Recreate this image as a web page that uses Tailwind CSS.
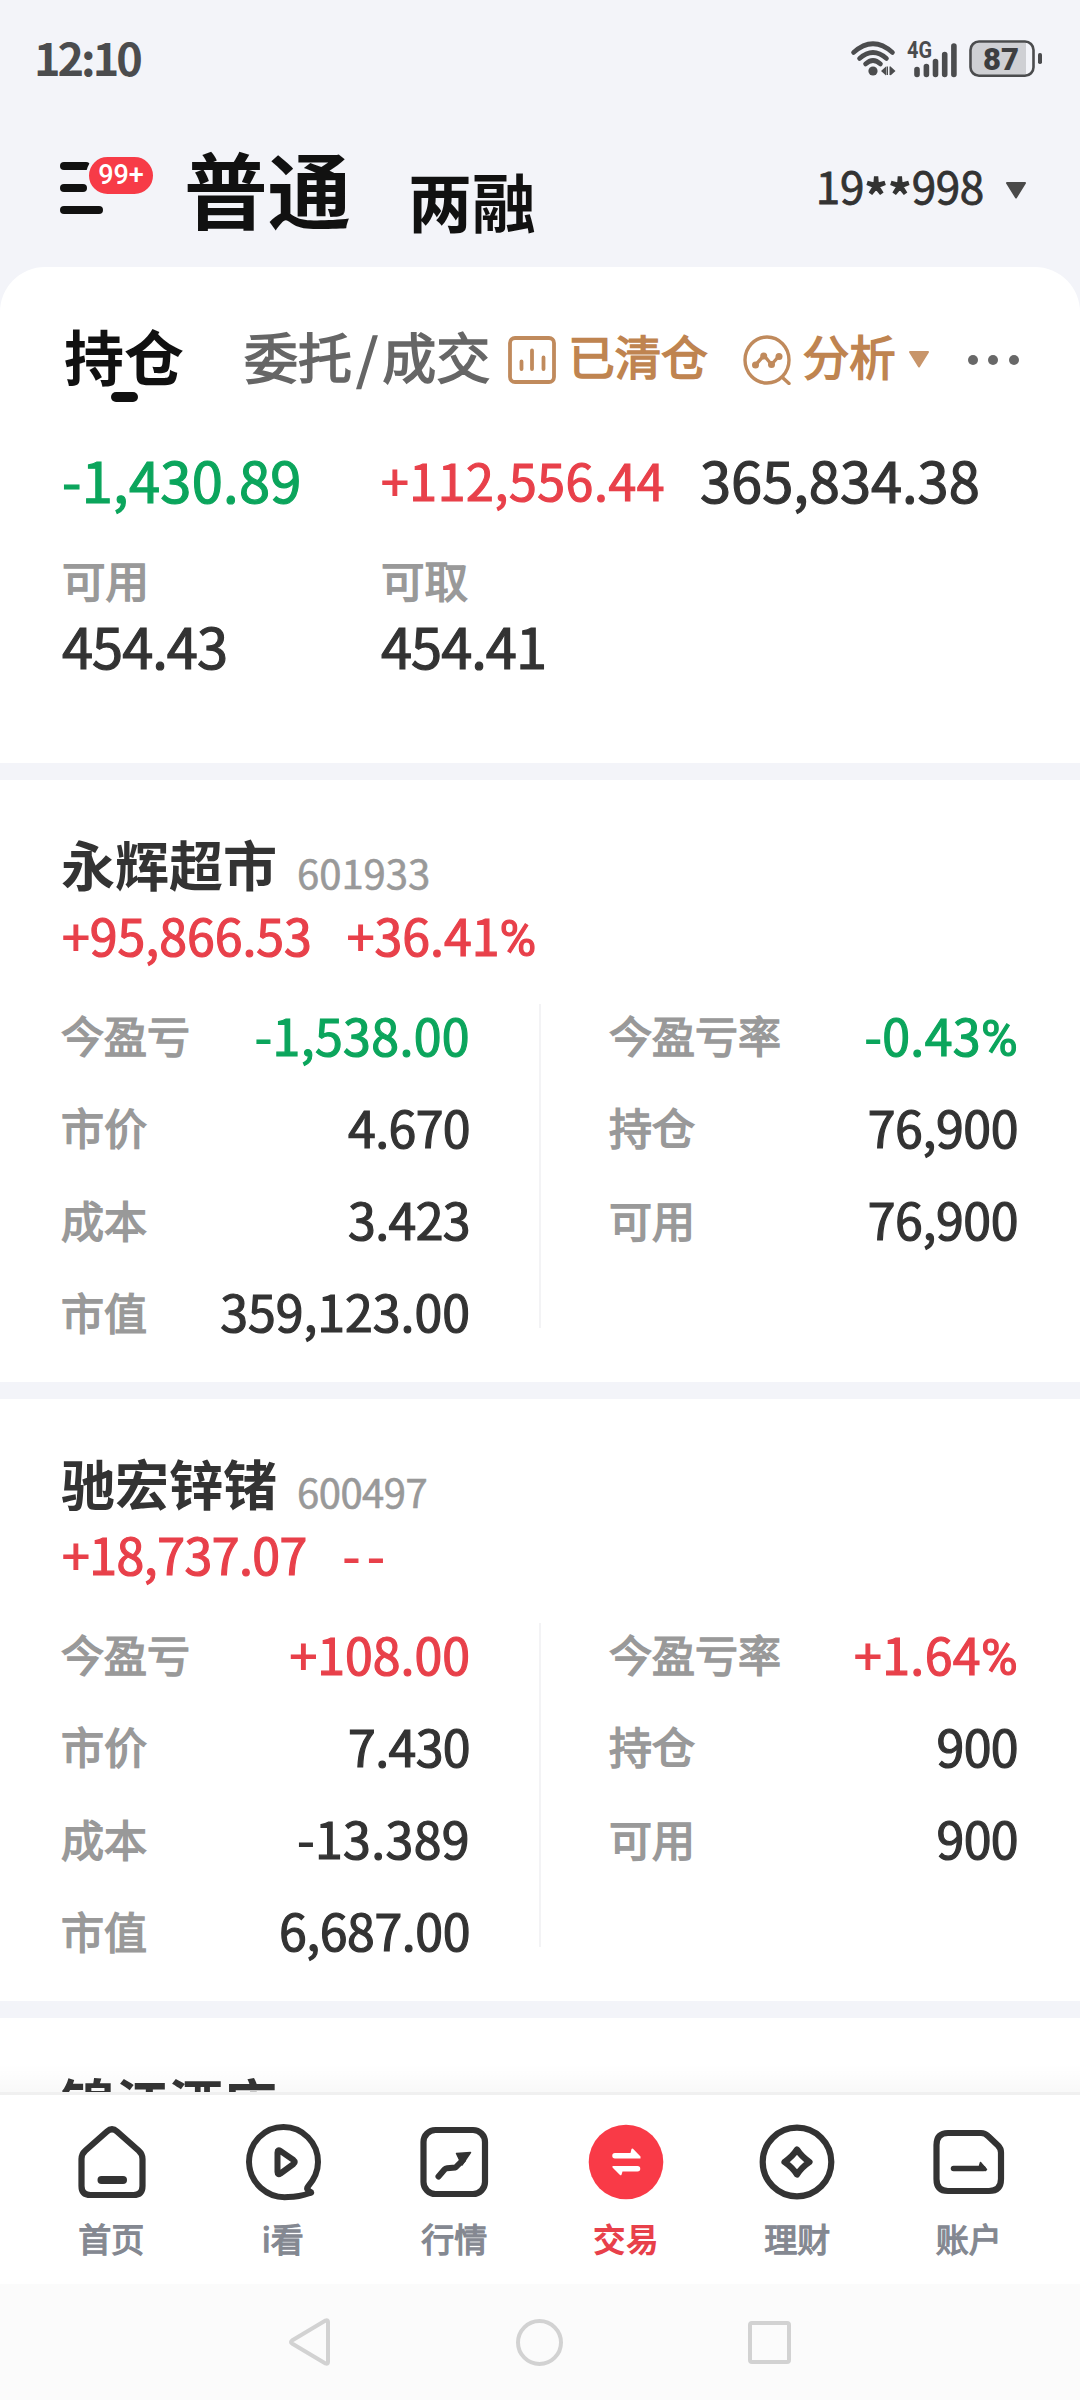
<!DOCTYPE html>
<html lang="zh-CN">
<head>
<meta charset="utf-8">
<meta name="viewport" content="width=1080">
<title>交易 - 持仓</title>
<script src="https://cdn.jsdelivr.net/npm/@tailwindcss/browser@4"></script>
</head>
<body class="bg-[#f3f4f9] font-['Noto_Sans_CJK_SC',sans-serif] text-[#333333]">
<div class="flex h-[2400px] w-[1080px] flex-col overflow-hidden whitespace-nowrap">

  <!-- Status bar -->
  <div class="flex h-[119px] shrink-0 items-center justify-between pr-[37px] pl-[34px]">
    <div class="pb-[6px] text-[45px] leading-none font-bold tracking-[-3px] text-[#4b4c4e]">12:10</div>
    <svg class="h-[60px] w-[194px]" viewBox="849 29 194 60" fill="none">
      <g stroke="#4b4c4e" stroke-width="4.6" stroke-linecap="round">
        <path d="M853.5 51.5Q873 34 892.5 51.5"/>
        <path d="M859.5 57.5Q873 45.500 886.500 57.500"/>
        <path d="M865.500 63Q873 56 880.500 63"/>
      </g>
      <circle cx="873" cy="70" r="4.600" fill="#4b4c4e"/>
      <path d="M881 70l5-4.500v9zM886.500 65.500h1.500v8.500h-1.500zM889.500 65.500h1.500v8.500h-1.500zM890.500 65.500l5 4.500-5 4.500z" fill="#4b4c4e"/>
      <text x="907" y="57.300" font-family="Roboto, sans-serif" font-weight="700" font-size="23" textLength="25" lengthAdjust="spacingAndGlyphs" fill="#4b4c4e">4G</text>
      <g stroke="#4b4c4e" stroke-width="5.600" stroke-linecap="round">
        <path d="M917 68.500V73.500M926.400 65.500V73.500M935.500 60.500V73.500M944.700 53.500V73.500M953.900 45V73.500"/>
      </g>
      <path d="M978 41.500H1026V74H978a6.500 6.500 0 0 1-6.500-6.500V48a6.500 6.500 0 0 1 6.500-6.500z" fill="#cfd0d4"/>
      <rect x="970.500" y="40.500" width="63" height="34.200" rx="8.500" stroke="#4b4c4e" stroke-width="2.600"/>
      <rect x="1038" y="52" width="4" height="11" rx="1.800" fill="#4b4c4e"/>
      <text x="983" y="69" font-family="Roboto, sans-serif" font-weight="900" font-size="32" textLength="36" lengthAdjust="spacingAndGlyphs" fill="#3d3e40">87</text>
    </svg>
  </div>

  <!-- Account header -->
  <div class="flex h-[148px] shrink-0 items-start pl-[60px]">
    <div class="relative mt-[43px] h-[52px] w-[124px]">
      <div class="flex flex-col gap-[14.500px]">
        <div class="h-[7.500px] w-[30px] rounded-full bg-[#111111]"></div>
        <div class="h-[7.500px] w-[27px] rounded-full bg-[#111111]"></div>
        <div class="h-[7.500px] w-[43px] rounded-full bg-[#111111]"></div>
      </div>
      <div class="absolute -top-[8px] left-[26px] flex h-[43px] w-[70px] items-center justify-center rounded-full border-[3px] border-[#f3f4f9] bg-[#f73b47] font-['Roboto',sans-serif] text-[27px] leading-none font-medium text-white">99+</div>
    </div>
    <h1 class="mt-[28px] text-[83.500px] leading-[80px] font-bold text-[#111111]">普通</h1>
    <div class="mt-[50px] ml-[57px] text-[64px] leading-[60px] font-bold text-[#111111]">两融</div>
    <div class="mt-[41px] ml-auto flex items-center pr-[53px]">
      <div class="flex text-[44px] leading-[50px] tracking-[-0.300px] [-webkit-text-stroke:0.8px_currentColor]">19<span class="mt-[11px] -mb-[11px] text-[52px] tracking-[-0.500px] [-webkit-text-stroke:1.6px_currentColor]">**</span>998</div>
      <svg class="mt-[10px] ml-[21px] h-[17px] w-[22px]" viewBox="0 0 22 17"><path d="M2 1H20L11 15.500z" fill="#4a4a4a" stroke="#4a4a4a" stroke-width="2" stroke-linejoin="round"/></svg>
    </div>
  </div>

  <!-- Scrolling content -->
  <main class="relative h-[1825px] shrink-0 overflow-hidden">
    <section class="h-[496px] rounded-t-[45px] bg-white">
      <nav class="flex h-[176px] items-center pl-[64px]">
        <div class="relative text-[60px] leading-[70px] font-bold text-[#111111]">持仓
          <span class="absolute top-[72px] left-[47px] h-[10px] w-[27px] rounded-full bg-[#111111]"></span>
        </div>
        <div class="ml-[60px] pt-[1px] text-[54px] text-[#666666] [-webkit-text-stroke:1.6px_currentColor]">委托<span class="mx-[4.500px]">/</span>成交</div>
        <svg class="mt-[9px] ml-[18px] h-[48px] w-[48px] shrink-0" viewBox="0 0 48 48" fill="none" stroke="#c08a5c" stroke-width="3.800" stroke-linecap="round">
          <rect x="2" y="2" width="44" height="44" rx="5"/>
          <path d="M13.500 25.500V33M24 14.500V33M35.500 21.500V33"/>
        </svg>
        <div class="ml-[12px] text-[46.500px] text-[#bf8450] [-webkit-text-stroke:1.6px_currentColor]">已清仓</div>
        <svg class="mt-[9px] ml-[35px] h-[50px] w-[48px] shrink-0" viewBox="0 0 48 50" fill="none" stroke="#c08a5c" stroke-width="3.400" stroke-linecap="round" stroke-linejoin="round">
          <ellipse cx="24" cy="25" rx="22" ry="23"/>
          <path d="M40 43l6 5.500M12.500 30l8.500-9.500 7.500 9 7.500-8.500"/>
          <g fill="#c08a5c" stroke="none"><circle cx="12.500" cy="30" r="3.500"/><circle cx="20.700" cy="21" r="3.500"/><circle cx="28.500" cy="29.500" r="3.500"/><circle cx="36" cy="21.500" r="3.500"/></g>
        </svg>
        <div class="ml-[12px] text-[46.500px] text-[#bf8450] [-webkit-text-stroke:1.6px_currentColor]">分析</div>
        <svg class="mt-[8px] ml-[12px] h-[17px] w-[22px] shrink-0" viewBox="0 0 22 17"><path d="M2 1H20L11 15.500z" fill="#c8956a" stroke="#c8956a" stroke-width="2" stroke-linejoin="round"/></svg>
        <div class="mt-[10px] ml-[38px] flex shrink-0 gap-[10.500px]">
          <span class="h-[10px] w-[10px] rounded-full bg-[#686868]"></span>
          <span class="h-[10px] w-[10px] rounded-full bg-[#686868]"></span>
          <span class="h-[10px] w-[10px] rounded-full bg-[#686868]"></span>
        </div>
      </nav>
      <div class="grid h-[79px] grid-cols-[319px_319px_1fr] items-center pb-[8px] pl-[62px] [-webkit-text-stroke:1.2px_currentColor]">
        <div class="text-[56px] leading-none tracking-[0.300px] text-[#0ba55c]">-1,430.89</div>
        <div class="text-[50px] leading-none tracking-[0.600px] text-[#e8404a]">+112,556.44</div>
        <div class="text-[56px] leading-none">365,834.38</div>
      </div>
      <div class="mt-[30px] grid grid-cols-[319px_319px_1fr] pl-[62px]">
        <div>
          <div class="text-[43.500px] leading-[56px] text-[#999999] [-webkit-text-stroke:1.6px_currentColor]">可用</div>
          <div class="text-[56px] leading-[73px] tracking-[-1px] [-webkit-text-stroke:1.2px_currentColor]">454.43</div>
        </div>
        <div>
          <div class="text-[43.500px] leading-[56px] text-[#999999] [-webkit-text-stroke:1.6px_currentColor]">可取</div>
          <div class="text-[56px] leading-[73px] tracking-[-1px] [-webkit-text-stroke:1.2px_currentColor]">454.41</div>
        </div>
      </div>
    </section>

    <!-- 永辉超市 -->
    <section class="mt-[17px] h-[602px] bg-white pt-[54px]">
      <div class="flex h-[59px] items-center pl-[61px]">
        <h2 class="text-[54px] leading-[59px] font-bold">永辉超市</h2>
        <span class="mt-[17px] ml-[20px] text-[40px] leading-none text-[#999999] [-webkit-text-stroke:0.6px_currentColor]">601933</span>
      </div>
      <div class="flex h-[88px] items-center gap-[35px] pb-[7px] pl-[62px] text-[50px] leading-none text-[#e8404a] [-webkit-text-stroke:1.2px_currentColor]">
        <span>+95,866.53</span><span>+36.41<span class="font-['Roboto',sans-serif] leading-[0]">%</span></span>
      </div>
      <div class="mt-[10px] flex pl-[61px] text-[50px] leading-none [-webkit-text-stroke:1.2px_currentColor]">
        <dl class="w-[409px]">
          <div class="flex h-[92.250px] items-center justify-between pb-[7px]"><dt class="pt-[2px] text-[43px] text-[#999999] [-webkit-text-stroke:1.6px_currentColor]">今盈亏</dt><dd class="tracking-[0.400px] text-[#0ba55c]">-1,538.00</dd></div>
          <div class="flex h-[92.250px] items-center justify-between pb-[7px]"><dt class="pt-[2px] text-[43px] text-[#999999] [-webkit-text-stroke:1.6px_currentColor]">市价</dt><dd class="tracking-[-0.600px]">4.670</dd></div>
          <div class="flex h-[92.250px] items-center justify-between pb-[7px]"><dt class="pt-[2px] text-[43px] text-[#999999] [-webkit-text-stroke:1.6px_currentColor]">成本</dt><dd class="tracking-[-0.600px]">3.423</dd></div>
          <div class="flex h-[92.250px] items-center justify-between pb-[7px]"><dt class="pt-[2px] text-[43px] text-[#999999] [-webkit-text-stroke:1.6px_currentColor]">市值</dt><dd>359,123.00</dd></div>
        </dl>
        <div class="mt-[13px] ml-[69px] h-[324px] w-[2px] bg-[#f3f3f5]"></div>
        <dl class="ml-[68px] w-[409px]">
          <div class="flex h-[92.250px] items-center justify-between pb-[7px]"><dt class="pt-[2px] text-[43px] text-[#999999] [-webkit-text-stroke:1.6px_currentColor]">今盈亏率</dt><dd class="tracking-[0.400px] text-[#0ba55c]">-0.43<span class="font-['Roboto',sans-serif] leading-[0]">%</span></dd></div>
          <div class="flex h-[92.250px] items-center justify-between pb-[7px]"><dt class="pt-[2px] text-[43px] text-[#999999] [-webkit-text-stroke:1.6px_currentColor]">持仓</dt><dd class="tracking-[-0.400px]">76,900</dd></div>
          <div class="flex h-[92.250px] items-center justify-between pb-[7px]"><dt class="pt-[2px] text-[43px] text-[#999999] [-webkit-text-stroke:1.6px_currentColor]">可用</dt><dd class="tracking-[-0.400px]">76,900</dd></div>
        </dl>
      </div>
    </section>

    <!-- 驰宏锌锗 -->
    <section class="mt-[17px] h-[602px] bg-white pt-[54px]">
      <div class="flex h-[59px] items-center pl-[61px]">
        <h2 class="text-[54px] leading-[59px] font-bold">驰宏锌锗</h2>
        <span class="mt-[17px] ml-[20px] text-[40px] leading-none tracking-[-0.500px] text-[#999999] [-webkit-text-stroke:0.6px_currentColor]">600497</span>
      </div>
      <div class="flex h-[88px] items-center gap-[36px] pb-[7px] pl-[62px] text-[50px] leading-none text-[#e8404a] [-webkit-text-stroke:1.2px_currentColor]">
        <span class="tracking-[-0.500px]">+18,737.07</span><span class="tracking-[7px]">--</span>
      </div>
      <div class="mt-[10px] flex pl-[61px] text-[50px] leading-none [-webkit-text-stroke:1.2px_currentColor]">
        <dl class="w-[409px]">
          <div class="flex h-[92.250px] items-center justify-between pb-[7px]"><dt class="pt-[2px] text-[43px] text-[#999999] [-webkit-text-stroke:1.6px_currentColor]">今盈亏</dt><dd class="text-[#e8404a]">+108.00</dd></div>
          <div class="flex h-[92.250px] items-center justify-between pb-[7px]"><dt class="pt-[2px] text-[43px] text-[#999999] [-webkit-text-stroke:1.6px_currentColor]">市价</dt><dd class="tracking-[-0.600px]">7.430</dd></div>
          <div class="flex h-[92.250px] items-center justify-between pb-[7px]"><dt class="pt-[2px] text-[43px] text-[#999999] [-webkit-text-stroke:1.6px_currentColor]">成本</dt><dd class="tracking-[0.400px]">-13.389</dd></div>
          <div class="flex h-[92.250px] items-center justify-between pb-[7px]"><dt class="pt-[2px] text-[43px] text-[#999999] [-webkit-text-stroke:1.6px_currentColor]">市值</dt><dd class="tracking-[-0.400px]">6,687.00</dd></div>
        </dl>
        <div class="mt-[13px] ml-[69px] h-[324px] w-[2px] bg-[#f3f3f5]"></div>
        <dl class="ml-[68px] w-[409px]">
          <div class="flex h-[92.250px] items-center justify-between pb-[7px]"><dt class="pt-[2px] text-[43px] text-[#999999] [-webkit-text-stroke:1.6px_currentColor]">今盈亏率</dt><dd class="tracking-[0.400px] text-[#e8404a]">+1.64<span class="font-['Roboto',sans-serif] leading-[0]">%</span></dd></div>
          <div class="flex h-[92.250px] items-center justify-between pb-[7px]"><dt class="pt-[2px] text-[43px] text-[#999999] [-webkit-text-stroke:1.6px_currentColor]">持仓</dt><dd class="tracking-[-0.600px]">900</dd></div>
          <div class="flex h-[92.250px] items-center justify-between pb-[7px]"><dt class="pt-[2px] text-[43px] text-[#999999] [-webkit-text-stroke:1.6px_currentColor]">可用</dt><dd class="tracking-[-0.600px]">900</dd></div>
        </dl>
      </div>
    </section>

    <!-- 锦江酒店 -->
    <section class="mt-[17px] h-[602px] bg-white pt-[54px]">
      <h2 class="relative z-10 pl-[61px] text-[54px] leading-[59px] font-bold">锦江酒店</h2>
    </section>
    <div class="absolute inset-x-0 bottom-0 h-[28px] bg-linear-to-b from-black/0 to-black/[0.025]"></div>
  </main>

  <!-- Tab bar -->
  <nav class="grid h-[192px] shrink-0 grid-cols-6 border-t-[3px] border-[#f0f0f0] bg-white px-[25.500px] pt-[27px] text-[33px] leading-[40px] text-[#848891] [-webkit-text-stroke:1.3px_currentColor]">
    <div class="flex flex-col items-center gap-[16px]">
      <svg class="h-[80px] w-[80px]" viewBox="0 0 80 80" fill="none" stroke="#333" stroke-width="6.200" stroke-linecap="round" stroke-linejoin="round">
        <path d="M36 9.500Q41 5 46 9.500L67.500 28.500Q71.500 32 71.500 37V64Q71.500 73 62.500 73H19.500Q10.500 73 10.500 64V37Q10.500 32 14.500 28.500z"/>
        <path d="M30.500 58H52" stroke-width="8"/>
      </svg>
      <span>首页</span>
    </div>
    <div class="flex flex-col items-center gap-[16px]">
      <svg class="h-[80px] w-[80px]" viewBox="0 0 80 80" fill="none" stroke="#333" stroke-width="6" stroke-linecap="round" stroke-linejoin="round">
        <path d="M67 71Q56 75 45 75A36 36 0 0 1 6 40A34.500 35 0 0 1 75 40Q75 53 65 64.500Q62.500 67.500 67 69.500Q69.500 70.500 67 71z"/>
        <path d="M34.500 30.500Q34.500 27 37.500 29L50.500 38Q53 40 50.500 42L37.500 51.500Q34.500 53.500 34.500 50z"/>
      </svg>
      <span>i看</span>
    </div>
    <div class="flex flex-col items-center gap-[16px]">
      <svg class="h-[80px] w-[80px]" viewBox="0 0 80 80" fill="none" stroke="#333" stroke-width="6.200" stroke-linecap="round" stroke-linejoin="round">
        <rect x="9.500" y="8" width="61.500" height="64" rx="12"/>
        <path d="M24.500 54.500L30.500 47.500Q31.500 46.300 33 46.200L41.500 45.500L49 38" stroke-width="6"/>
        <path d="M42.500 31.500L56.500 30.500L48 43z" fill="#333" stroke-width="1.500"/>
      </svg>
      <span>行情</span>
    </div>
    <div class="flex flex-col items-center gap-[16px] text-[#e8404a]">
      <svg class="h-[80px] w-[80px]" viewBox="0 0 80 80">
        <circle cx="40" cy="40" r="37.300" fill="#f93a47"/>
        <path d="M29 31H44.500L45.500 27Q46 26 47 26.800L54.500 34.500V36.500H29A2.700 2.700 0 0 1 29 31z" fill="#fff"/>
        <path d="M51.500 44H26.500V45.500L34 53Q35 53.800 35.500 52.800L36.500 49.500H51.500A2.700 2.700 0 0 0 51.500 44z" fill="#fff"/>
      </svg>
      <span class="font-bold [-webkit-text-stroke:0px]">交易</span>
    </div>
    <div class="flex flex-col items-center gap-[16px]">
      <svg class="h-[80px] w-[80px]" viewBox="0 0 80 80" fill="none" stroke="#333" stroke-width="6.200" stroke-linejoin="round">
        <circle cx="40" cy="40" r="34.300"/>
        <path d="M40 27.500Q44.500 34.500 52.500 40Q44.500 45.500 40 52.500Q35.500 45.500 27.500 40Q35.500 34.500 40 27.500z"/>
      </svg>
      <span>理财</span>
    </div>
    <div class="flex flex-col items-center gap-[16px]">
      <svg class="h-[80px] w-[80px]" viewBox="0 0 80 80" fill="none" stroke="#333" stroke-width="6.200" stroke-linecap="round" stroke-linejoin="round">
        <path d="M19 11H52Q56 11 59 14L69 23.500Q72 26.500 72 30.500V57Q72 69 60 69H19Q7.500 69 7.500 57V23Q7.500 11 19 11z"/>
        <path d="M24.500 46.500H54" stroke-width="5.500"/>
        <path d="M50.500 44L51.500 40.500L57.500 47.500L56.500 48.500L50.500 48z" fill="#333" stroke-width="1.500"/>
      </svg>
      <span>账户</span>
    </div>
  </nav>

  <!-- System navigation -->
  <div class="flex h-[116px] shrink-0 items-center justify-center gap-[185px] bg-[#fbfbfb]">
    <svg class="h-[48px] w-[42px]" viewBox="0 0 42 48" fill="none"><path d="M36.500 2.500Q39 1.500 39 4V44Q39 46.500 36.500 45.500L3 25.500Q1 24 3 22.500z" stroke="#d2d2d2" stroke-width="4" stroke-linejoin="round"/></svg>
    <div class="h-[47px] w-[47px] rounded-full border-4 border-[#d2d2d2]"></div>
    <div class="h-[43px] w-[43px] rounded-[4px] border-4 border-[#d2d2d2]"></div>
  </div>
</div>
</body>
</html>
